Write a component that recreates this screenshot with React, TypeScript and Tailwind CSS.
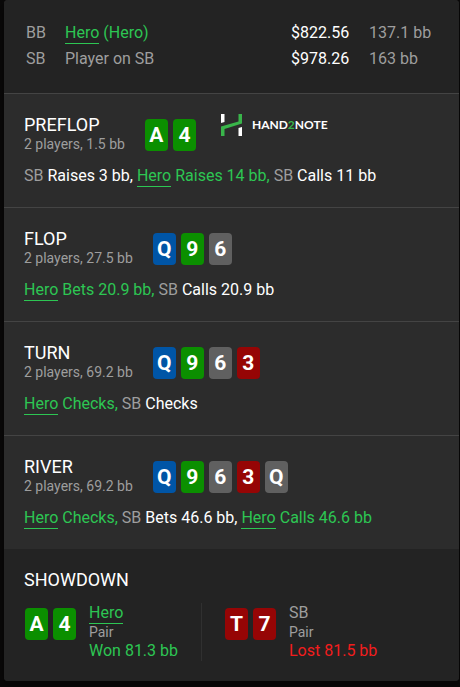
import type { ReactNode } from "react";

type Suit = "green" | "blue" | "gray" | "red";
type CardData = { rank: string; suit: Suit };
type Action = { hero?: boolean; text: string };

const suitColors: Record<Suit, string> = {
  green: "bg-[#0b8f00]",
  blue: "bg-[#0055a6]",
  gray: "bg-[#606060]",
  red: "bg-[#960505]",
};

const pocket: CardData[] = [
  { rank: "A", suit: "green" },
  { rank: "4", suit: "green" },
];

const board: CardData[] = [
  { rank: "Q", suit: "blue" },
  { rank: "9", suit: "green" },
  { rank: "6", suit: "gray" },
  { rank: "3", suit: "red" },
  { rank: "Q", suit: "gray" },
];

const streets: { name: string; info: string; cards: CardData[]; logo?: boolean; actions: Action[] }[] = [
  {
    name: "PREFLOP",
    info: "2 players, 1.5 bb",
    cards: pocket,
    logo: true,
    actions: [{ text: "Raises 3 bb" }, { hero: true, text: "Raises 14 bb" }, { text: "Calls 11 bb" }],
  },
  {
    name: "FLOP",
    info: "2 players, 27.5 bb",
    cards: board.slice(0, 3),
    actions: [{ hero: true, text: "Bets 20.9 bb" }, { text: "Calls 20.9 bb" }],
  },
  {
    name: "TURN",
    info: "2 players, 69.2 bb",
    cards: board.slice(0, 4),
    actions: [{ hero: true, text: "Checks" }, { text: "Checks" }],
  },
  {
    name: "RIVER",
    info: "2 players, 69.2 bb",
    cards: board,
    actions: [{ hero: true, text: "Checks" }, { text: "Bets 46.6 bb" }, { hero: true, text: "Calls 46.6 bb" }],
  },
];

function Hero() {
  return <span className="border-b border-[#2dc653] pb-px text-[#2dc653]">Hero</span>;
}

function Cards({ cards }: { cards: CardData[] }) {
  return (
    <div className="flex gap-[5px]">
      {cards.map((card, i) => (
        <span
          key={i}
          className={`flex h-8 w-[23px] items-center justify-center rounded text-[21px] leading-8 font-bold text-white ${suitColors[card.suit]}`}
        >
          {card.rank}
        </span>
      ))}
    </div>
  );
}

function Logo() {
  return (
    <div className="flex items-center gap-2.5">
      <svg width="21" height="22" viewBox="0 0 21 22" aria-hidden="true">
        <path d="M0 0h3.500v8l-3.500 1zM21 22h-3.500v-8l3.500-1z" fill="#fff" />
        <path d="M0 22v-9.500l17.500-5V0h3.500v9.500l-17.500 5.500v7z" fill="#39b54a" />
      </svg>
      <span className="font-[Lato,sans-serif] text-xs font-bold text-white">
        HAND<span className="text-[#39b54a]">2</span>NOTE
      </span>
    </div>
  );
}

/** One line of actions, separated by commas in the colour of the player who acted. */
function Actions({ actions }: { actions: Action[] }) {
  return (
    <p className="mt-[13px] leading-6">
      {actions.map((action, i) => (
        <span key={i} className={action.hero ? "text-[#2dc653]" : "text-white"}>
          {action.hero ? <Hero /> : <span className="text-[#9e9e9e]">SB</span>} {action.text}
          {i < actions.length - 1 && ", "}
        </span>
      ))}
    </p>
  );
}

function Result({ cards, name, children }: { cards: CardData[]; name: ReactNode; children: ReactNode }) {
  return (
    <div className="flex gap-[13px]">
      <div className="pt-[5px]">
        <Cards cards={cards} />
      </div>
      <div>
        <div className="leading-5">{name}</div>
        <div className="text-sm leading-[18px] text-[#9e9e9e]">Pair</div>
        <div className="leading-5">{children}</div>
      </div>
    </div>
  );
}

export default function App() {
  return (
    <div className="min-h-screen bg-[#090808] pr-px pb-1.5 pl-1 font-[Roboto,sans-serif] text-base text-[#9e9e9e]">
      <main className="overflow-hidden rounded bg-[#2c2c2c] shadow-lg">
        <header className="bg-[#232323] px-[22px] pt-5 pb-[21px]">
          <table className="w-full leading-[26px]">
            <tbody>
              <tr>
                <td className="w-[39px] p-0">BB</td>
                <td className="p-0 text-[#2dc653]">
                  <Hero /> (Hero)
                </td>
                <td className="w-[78px] p-0 text-white">$822.56</td>
                <td className="w-[68px] p-0 whitespace-nowrap">137.1 bb</td>
              </tr>
              <tr>
                <td className="p-0">SB</td>
                <td className="p-0">Player on SB</td>
                <td className="p-0 text-white">$978.26</td>
                <td className="p-0">163 bb</td>
              </tr>
            </tbody>
          </table>
        </header>

        {streets.map((street) => (
          <section key={street.name} className="border-t border-[#444] px-5 pt-5 pb-[19px]">
            <div className="flex h-[37px] items-start">
              <div className="pr-5">
                <h2 className="text-lg leading-[22px] text-white">{street.name}</h2>
                <p className="text-sm leading-4">{street.info}</p>
              </div>
              <div className="pt-[5px]">
                <Cards cards={street.cards} />
              </div>
              {street.logo && (
                <div className="pl-[25px]">
                  <Logo />
                </div>
              )}
            </div>
            <Actions actions={street.actions} />
          </section>
        ))}

        <section className="bg-[#232323] px-5 pt-5 pb-5">
          <h2 className="text-lg leading-[22px] text-white">SHOWDOWN</h2>
          <div className="mt-3 flex">
            <div className="w-[178px] border-r border-[#303030] pl-px">
              <Result cards={pocket} name={<Hero />}>
                <span className="text-[#2dc653]">Won 81.3 bb</span>
              </Result>
            </div>
            <div className="pl-[23px]">
              <Result
                cards={[
                  { rank: "T", suit: "red" },
                  { rank: "7", suit: "red" },
                ]}
                name="SB"
              >
                <span className="text-[#f21d1d]">Lost 81.5 bb</span>
              </Result>
            </div>
          </div>
        </section>
      </main>
    </div>
  );
}
